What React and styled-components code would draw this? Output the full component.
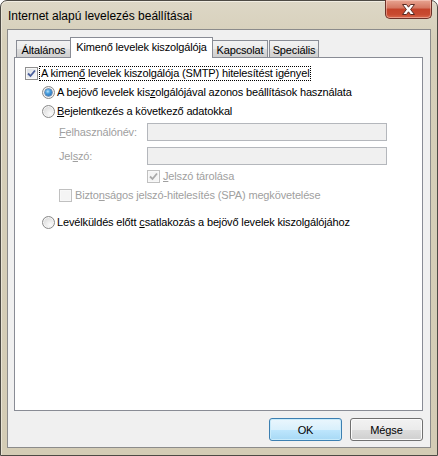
import styled, { createGlobalStyle, css } from 'styled-components'

const Global = createGlobalStyle`
    html, body {
        margin: 0;
        padding: 0;
        background: #ffffff;
    }
    body {
        font-family: "Liberation Sans", Arial, sans-serif;
        font-size: 11px;
        letter-spacing: -0.15px;
        color: #000;
    }
`

const App = () => {
    return (
        <>
            <Global/>
            <Window>
                <TitleBar>
                    <Title>Internet alapú levelezés beállításai</Title>
                    <CloseButton>
                        <svg width="17" height="13" viewBox="0 0 17 13">
                            <path d="M2.5 1.5 L6.5 1.5 L8.5 4.2 L10.5 1.5 L14.5 1.5 L10.6 6.5 L14.5 11.5 L10.5 11.5 L8.5 8.8 L6.5 11.5 L2.5 11.5 L6.4 6.5 Z"
                                  fill="#ffffff" stroke="#5a2a22" strokeWidth="1" strokeLinejoin="round"/>
                        </svg>
                    </CloseButton>
                </TitleBar>
                <Client>
                    <TabStrip>
                        <Tab width={55}>Általános</Tab>
                        <Tab active width={143}>Kimenő levelek kiszolgálója</Tab>
                        <Tab width={56}>Kapcsolat</Tab>
                        <Tab gap width={50}>Speciális</Tab>
                    </TabStrip>
                    <Panel>
                        <OptionRow>
                            <CheckBox checked/>
                            <FocusLabel>A kimen<u>ő</u> levelek kiszolgálója (SMTP) hitelesítést igényel</FocusLabel>
                        </OptionRow>
                        <SubGroup>
                            <OptionRow top={4}>
                                <Radio selected/>
                                <Label>A bejövő levelek kis<u>z</u>olgálójával azonos beállítások használata</Label>
                            </OptionRow>
                            <OptionRow top={4}>
                                <Radio/>
                                <Label><u>B</u>ejelentkezés a következő adatokkal</Label>
                            </OptionRow>
                            <SubGroup>
                                <FieldRow top={4}>
                                    <FieldLabel><u>F</u>elhasználónév:</FieldLabel>
                                    <Input/>
                                </FieldRow>
                                <FieldRow top={6}>
                                    <FieldLabel>Jel<u>s</u>zó:</FieldLabel>
                                    <Input/>
                                </FieldRow>
                                <OptionRow top={4} indent={88}>
                                    <CheckBox checked disabled/>
                                    <Label disabled spaced><u>J</u>elszó tárolása</Label>
                                </OptionRow>
                                <OptionRow top={4}>
                                    <CheckBox disabled/>
                                    <Label disabled spaced>Bizto<u>n</u>ságos jelszó-hitelesítés (SPA) megkövetelése</Label>
                                </OptionRow>
                            </SubGroup>
                            <OptionRow top={12}>
                                <Radio/>
                                <Label>Levélküldés előtt <u>c</u>satlakozás a bejövő levelek kiszolgálójához</Label>
                            </OptionRow>
                        </SubGroup>
                    </Panel>
                    <ButtonRow>
                        <Button primary>OK</Button>
                        <Button>Mégse</Button>
                    </ButtonRow>
                </Client>
            </Window>
        </>
    )
}

const CheckBox = ({checked, disabled}) => (
    <CheckBoxBox disabled={disabled}>
        {checked && (
            <svg width="9" height="9" viewBox="0 0 9 9">
                <path d="M1 4.5 L3.5 7 L8 1.5" fill="none"
                      stroke={disabled ? '#a9a9a9' : '#4a5f9c'} strokeWidth="1.8"/>
            </svg>
        )}
    </CheckBoxBox>
)

const Radio = ({selected}) => (
    <RadioBox>
        {selected && <RadioDot/>}
    </RadioBox>
)

export default App

//styled components

const Window = styled.div`
    width: 438px;
    height: 456px;
    box-sizing: border-box;
    border: 1px solid #4d4a44;
    border-radius: 7px 7px 0 0;
    background: linear-gradient(#ddd7c6, #d6cfb9 40px, #d4ccb5);
    box-shadow: inset 0 1px 0 #f1ede2, inset 1px 0 0 #e9e4d5;
    display: flex;
    flex-direction: column;
`

const TitleBar = styled.div`
    height: 28px;
    display: flex;
    justify-content: space-between;
    align-items: flex-start;
    padding-left: 7px;
`

const Title = styled.div`
    font-size: 12px;
    line-height: 12px;
    letter-spacing: 0;
    margin-top: 9px;
    color: #000;
`

const CloseButton = styled.div`
    width: 47px;
    height: 19px;
    margin-top: -1px;
    margin-right: 5px;
    box-sizing: border-box;
    border: 1px solid #6d3128;
    border-top: none;
    border-radius: 0 0 5px 5px;
    background: linear-gradient(#e8a592 0%, #d47660 45%, #c4432a 50%, #c84a30 80%, #d9694d 100%);
    box-shadow: inset 0 0 0 1px rgba(255, 220, 210, 0.45);
    display: flex;
    align-items: center;
    justify-content: center;
`

const Client = styled.div`
    flex: 1;
    margin: 0 6px 7px 6px;
    border: 1px solid #8b8b8b;
    background: #f0f0f0;
    display: flex;
    flex-direction: column;
    padding: 7px 7px 6px 6px;
`

const TabStrip = styled.div`
    display: flex;
    align-items: flex-end;
    height: 20px;
    padding-left: 2px;
    position: relative;
    z-index: 1;
`

const Tab = styled.div`
    width: ${p => p.width}px;
    height: 17px;
    box-sizing: border-box;
    border: 1px solid #898c95;
    border-bottom: none;
    margin-right: -1px;
    margin-left: ${p => p.gap ? '2px' : '0'};
    display: flex;
    align-items: center;
    justify-content: center;
    white-space: nowrap;
    line-height: 11px;
    padding-top: 2px;
    background: linear-gradient(#f2f2f2 0%, #ebebeb 50%, #dddddd 51%, #cfcfcf 100%);
    ${p => p.active && css`
        height: 21px;
        margin-bottom: -1px;
        padding: 0 0 2px 0;
        background: #ffffff;
        position: relative;
        z-index: 2;
    `}
`

const Panel = styled.div`
    flex: 1;
    background: #ffffff;
    border: 1px solid #898c95;
    padding: 8px 0 0 10px;
`

const OptionRow = styled.div`
    display: flex;
    align-items: center;
    height: 15px;
    margin-top: ${p => p.top || 0}px;
    margin-left: ${p => p.indent || 0}px;
    white-space: nowrap;
`

const SubGroup = styled.div`
    margin-left: 17px;
`

const Label = styled.span`
    line-height: 13px;
    margin-left: ${p => p.spaced ? '3px' : '2px'};
    color: ${p => p.disabled ? '#a0a0a0' : '#000'};
`

const FocusLabel = styled.span`
    margin-left: 1px;
    line-height: 13px;
    padding: 0 1px;
    border: 1px dotted #000;
`

const FieldRow = styled.div`
    display: flex;
    align-items: center;
    height: 18px;
    margin-top: ${p => p.top || 0}px;
`

const FieldLabel = styled.span`
    width: 88px;
    color: #a0a0a0;
`

const Input = styled.div`
    width: 240px;
    height: 18px;
    box-sizing: border-box;
    border: 1px solid #b4b7bc;
    background: #f0f0f0;
`

const CheckBoxBox = styled.div`
    width: 13px;
    height: 13px;
    box-sizing: border-box;
    flex-shrink: 0;
    border: 1px solid ${p => p.disabled ? '#c0c0c0' : '#8f8f8f'};
    background: ${p => p.disabled
        ? '#f4f4f4'
        : 'linear-gradient(135deg, #d7dbe1 0%, #eceef0 60%, #fbfbfb 100%)'};
    box-shadow: inset 0 0 0 1px #f8f8f8;
    display: flex;
    align-items: center;
    justify-content: center;
`

const RadioBox = styled.div`
    width: 13px;
    height: 13px;
    box-sizing: border-box;
    flex-shrink: 0;
    border-radius: 50%;
    border: 1px solid #8a8a8a;
    background: radial-gradient(circle at 65% 70%, #fbfbfb 0%, #e6e6e6 50%, #cfcfcf 100%);
    box-shadow: inset 0 0 0 1px #f6f6f6;
    display: flex;
    align-items: center;
    justify-content: center;
`

const RadioDot = styled.div`
    width: 7px;
    height: 7px;
    border-radius: 50%;
    background: radial-gradient(circle at 40% 35%, #b6e1fb 0%, #4aa0df 35%, #1b5ba6 100%);
    box-shadow: 0 0 0 0.5px #1f4b85;
`

const ButtonRow = styled.div`
    display: flex;
    justify-content: flex-end;
    gap: 8px;
    margin-top: 7px;
`

const Button = styled.div`
    width: 73px;
    height: 23px;
    box-sizing: border-box;
    border: 1px solid ${p => p.primary ? '#3c7fb1' : '#707070'};
    border-radius: 3px;
    display: flex;
    align-items: center;
    justify-content: center;
    background: ${p => p.primary
        ? 'linear-gradient(#eaf6fd 0%, #d9f0fc 50%, #bee6fd 51%, #a7d9f5 100%)'
        : 'linear-gradient(#f2f2f2 0%, #ebebeb 50%, #dddddd 51%, #cfcfcf 100%)'};
    box-shadow: inset 0 0 0 1px ${p => p.primary ? '#c8ebfb' : '#fbfbfb'};
`
